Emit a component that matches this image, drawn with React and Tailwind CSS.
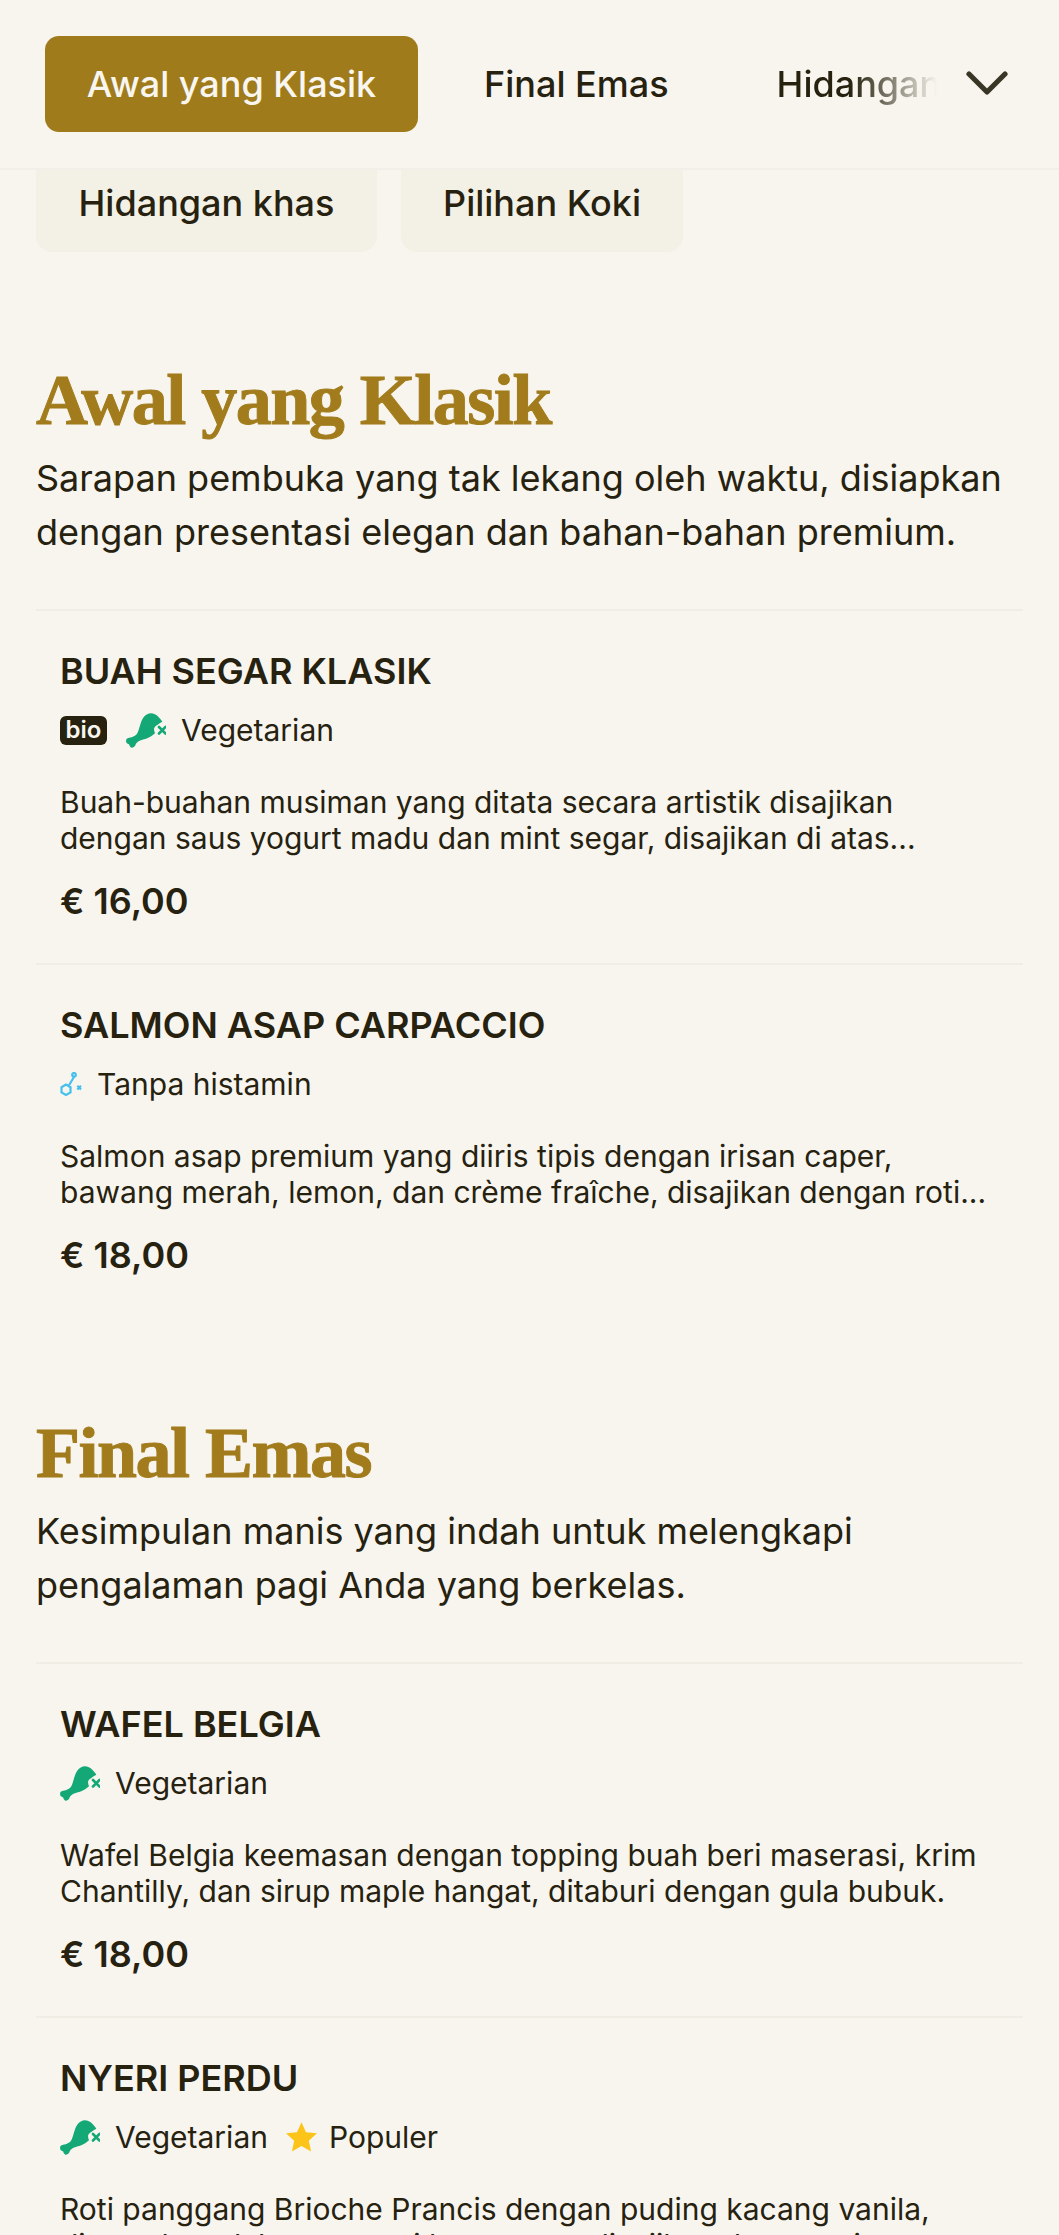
import React from "react";

const font = "font-['Inter',sans-serif]";

const ChickenIcon = () => (
  <svg width="40" height="35" viewBox="0 0 40 35" className="shrink-0">
    <path d="M0.5 26 C2 24.5 4 25 5.7 24.3 C8 23.5 10 22.5 11.3 20.3 C13 17 13.5 13.5 14.7 10.3 C15.5 7.5 16.5 5.5 18 3.7 C20 1.5 22.5 0.3 24.7 0.3 C27.5 0.3 30.5 1.7 32.3 3.7 C33.8 5.3 35.5 7 36.3 8.7 C34.5 9.5 32.8 10.5 31.3 12 C29.5 13 28 14.5 28 16 C28 17.5 28.5 19 29 20.3 C26.5 22.5 24 24.3 21.3 25.3 C18.5 26.3 15.5 26.8 13 28 C11.5 28.7 10.5 30 9.7 31.3 C9.5 33 7.5 35 5.7 34.7 C4 34.4 3.5 32.5 3 31.3 C2 31 0.5 30.5 0.3 29.3 C0 28 0 27 0.5 26 Z" fill="#13a876" />
    <path d="M33 14 L39.5 20.5 M39.5 14 L33 20.5" stroke="#13a876" strokeWidth="2.6" strokeLinecap="round" />
  </svg>
);

const HistamineIcon = () => (
  <svg width="22" height="24" viewBox="-1 0 22 24" className="shrink-0" fill="none" stroke="#45c0ee" strokeWidth="2.2">
    <path d="M0.5 15.2 L5 12.6 L9.5 15.2 L9.5 20.4 L5 23 L0.5 20.4 Z" />
    <path d="M8 13.3 L11.3 7.7 L13 5" />
    <circle cx="13" cy="2.8" r="1.8" />
    <path d="M16.3 13.7 L20 17.5 M20 13.7 L16.3 17.5" />
  </svg>
);

const StarIcon = () => (
  <svg width="31" height="30" viewBox="1 1.5 22 21" className="shrink-0">
    <path d="M12 1.5 L15.2 8.6 L23 9.4 L17.2 14.6 L18.8 22.3 L12 18.4 L5.2 22.3 L6.8 14.6 L1 9.4 L8.8 8.6 Z" fill="#fcc419" />
  </svg>
);

const Bio = () => (
  <span className="mr-[1px] flex h-[29px] w-[47px] items-center justify-center rounded-[6px] bg-[#26220f] text-[24px] font-semibold leading-none text-[#f8f5ee]">
    bio
  </span>
);

const Tag = ({ kind, label }) => (
  <span className={`flex items-center ${kind === "star" ? "gap-[12px]" : "gap-[15px]"}`}>
    {kind === "chicken" && <ChickenIcon />}
    {kind === "histamine" && <HistamineIcon />}
    {kind === "star" && <StarIcon />}
    <span>{label}</span>
  </span>
);

const sections = [
  {
    title: "Awal yang Klasik",
    desc: ["Sarapan pembuka yang tak lekang oleh waktu, disiapkan", "dengan presentasi elegan dan bahan-bahan premium."],
    items: [
      {
        name: "BUAH SEGAR KLASIK",
        bio: true,
        tags: [["chicken", "Vegetarian"]],
        text: ["Buah-buahan musiman yang ditata secara artistik disajikan", "dengan saus yogurt madu dan mint segar, disajikan di atas..."],
        price: "€ 16,00",
      },
      {
        name: "SALMON ASAP CARPACCIO",
        tags: [["histamine", "Tanpa histamin"]],
        text: ["Salmon asap premium yang diiris tipis dengan irisan caper,", "bawang merah, lemon, dan crème fraîche, disajikan dengan roti..."],
        price: "€ 18,00",
      },
    ],
  },
  {
    title: "Final Emas",
    desc: ["Kesimpulan manis yang indah untuk melengkapi", "pengalaman pagi Anda yang berkelas."],
    items: [
      {
        name: "WAFEL BELGIA",
        tags: [["chicken", "Vegetarian"]],
        text: ["Wafel Belgia keemasan dengan topping buah beri maserasi, krim", "Chantilly, dan sirup maple hangat, ditaburi dengan gula bubuk."],
        price: "€ 18,00",
      },
      {
        name: "NYERI PERDU",
        tags: [["chicken", "Vegetarian"], ["star", "Populer"]],
        text: ["Roti panggang Brioche Prancis dengan puding kacang vanila,", "dimasak perlahan sampai keemasan, disajikan dengan sirup..."],
        price: "€ 16,00",
      },
    ],
  },
];

const MenuItem = ({ item }) => (
  <div className="border-t-2 border-[#f0ede5] px-[24px] pt-[37px] pb-[40px] text-[#26220f]">
    <h3 className="text-[36px] font-semibold leading-[46px]">{item.name}</h3>
    <div className="mt-[16px] flex h-[40px] items-center gap-[18px] text-[30px]">
      {item.bio && <Bio />}
      {item.tags.map(([kind, label]) => (
        <Tag key={label} kind={kind} label={label} />
      ))}
    </div>
    <p className="mt-[34px] text-[30px] leading-[36px]">
      {item.text.map((line) => (
        <span key={line} className="block whitespace-nowrap">{line}</span>
      ))}
    </p>
    <p className="mt-[23px] text-[36px] font-semibold leading-[44px]">{item.price}</p>
  </div>
);

export default function App() {
  return (
    <div className={`h-[2235px] overflow-hidden bg-[#f8f5ef] ${font}`}>
      <div className="relative z-10 flex h-[170px] items-center border-b-2 border-[#f2efe8] bg-[#f8f5ef] pl-[45px] pr-[51px]">
        <div className="flex h-[96px] w-[373px] shrink-0 items-center justify-center rounded-[14px] bg-[#a07b1c] text-[36px] font-medium text-[#f9f6ef]">
          Awal yang Klasik
        </div>
        <div className="ml-[66px] shrink-0 text-[36px] font-medium text-[#26220f]">Final Emas</div>
        <div className="ml-[108px] w-[160px] shrink-0 overflow-hidden whitespace-nowrap bg-gradient-to-r from-[#26220f] from-45% to-[#f8f5ef] bg-clip-text text-[36px] font-medium text-transparent">
          Hidangan khas
        </div>
        <svg width="42" height="26" viewBox="0 0 42 26" className="mb-[3px] ml-auto shrink-0" fill="none" stroke="#3a3626" strokeWidth="5.2" strokeLinecap="round" strokeLinejoin="round">
          <path d="M3 4 L21 22 L39 4" />
        </svg>
      </div>

      <div className="-mt-[16px] flex gap-[24px] px-[36px]">
        <div className="flex h-[98px] w-[341px] items-center justify-center rounded-[16px] bg-[#f3f0e6] text-[36px] font-medium text-[#26220f]">
          Hidangan khas
        </div>
        <div className="flex h-[98px] w-[282px] items-center justify-center rounded-[16px] bg-[#f3f0e6] text-[36px] font-medium text-[#26220f]">
          Pilihan Koki
        </div>
      </div>

      <main className="px-[36px]">
        {sections.map((section, i) => (
          <section key={section.title} className={i === 0 ? "mt-[108px]" : "mt-[96px]"}>
            <h2 className="font-['Liberation_Serif',serif] text-[72px] font-bold leading-[80px] tracking-[-1.5px] text-[#a27c1c] [-webkit-text-stroke:1px_#a27c1c]">
              {section.title}
            </h2>
            <p className="mt-[11px] whitespace-nowrap text-[36px] leading-[54px] text-[#26220f]">
              {section.desc.map((line) => (
                <span key={line} className="block">{line}</span>
              ))}
            </p>
            <div className="mt-[50px]">
              {section.items.map((item) => (
                <MenuItem key={item.name} item={item} />
              ))}
            </div>
          </section>
        ))}
      </main>
    </div>
  );
}
